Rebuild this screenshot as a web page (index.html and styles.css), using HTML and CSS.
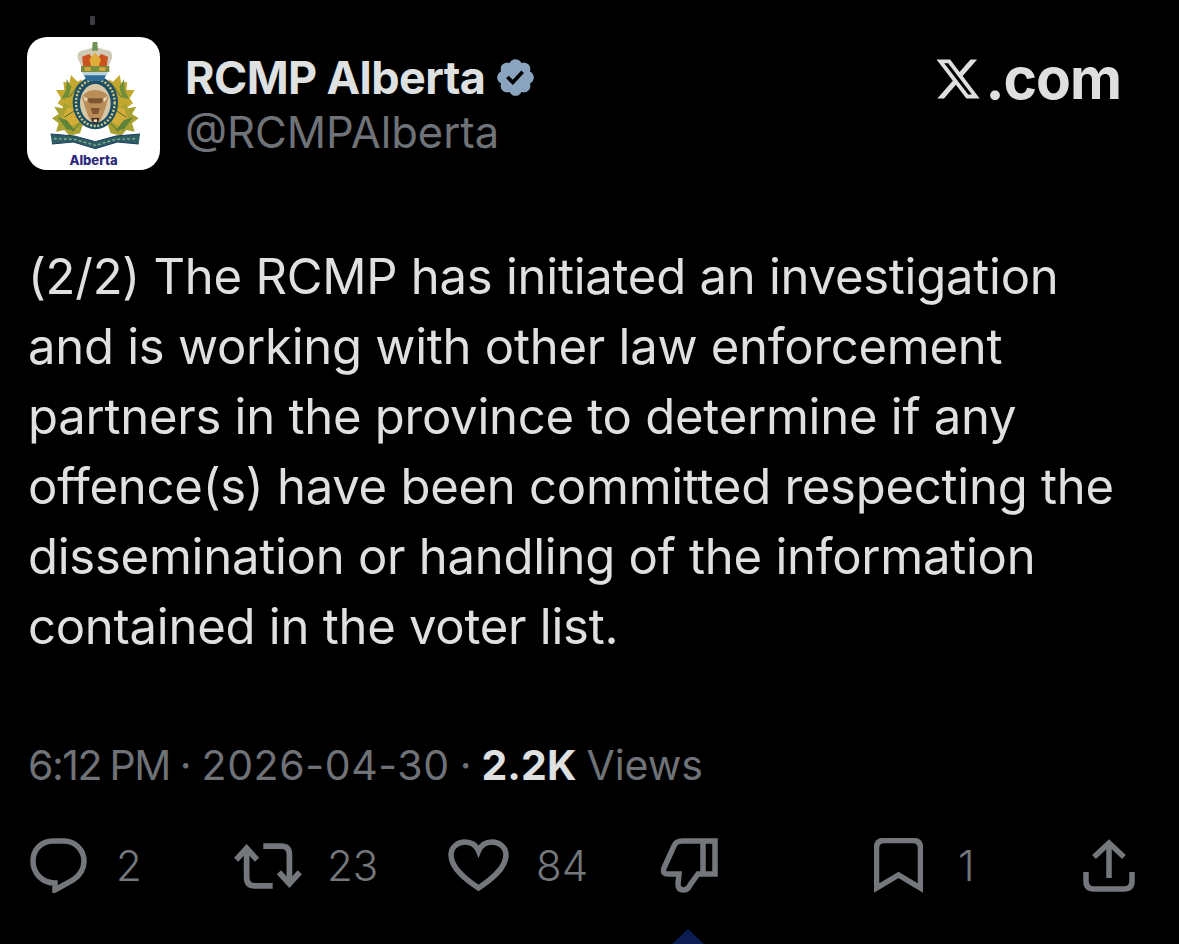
FILE: index.html
```html
<!DOCTYPE html>
<html lang="en">

<head>
    <meta charset="UTF-8">
    <title>RCMP Alberta on X</title>
    <link rel="stylesheet" href="styles.css">
</head>

<body>
    <span class="notch"></span>

    <header class="header">
        <div class="avatar">
            <svg class="crest" viewBox="0 0 288 330">
                <defs>
                    <g id="leaves">
                        <path fill="#c4a72e" d="M75 105 L95 125 L108 118 L106 160 L97 200 L60 207 L35 190 L45 175 L30 150 L55 150 L52 125 L70 130 Z" />
                        <path fill="#6f8f3a" d="M62 118 L76 140 L68 172 L46 178 L60 150 Z" />
                        <path fill="#a9a233" d="M55 190 L75 200 L97 195 L112 250 L102 280 L70 287 L55 270 L30 275 L38 250 L18 235 L38 222 L25 200 L50 205 Z" />
                        <path fill="#d3ad38" d="M62 205 L92 200 L100 245 L72 262 L48 240 Z" />
                        <path fill="#5f8338" d="M35 232 L62 240 L88 272 L62 268 Z" />
                        <path fill="none" stroke="#4d6d33" stroke-width="3" d="M100 130 L70 172 M96 205 L55 232 M102 250 L78 275" />
                    </g>
                </defs>
                <g class="crest_soft">
                    <!-- maple leaves -->
                    <use href="#leaves" />
                    <use href="#leaves" transform="matrix(-1 0 0 1 296 0)" />
                    <!-- ring -->
                    <ellipse cx="148" cy="188" rx="68" ry="80" fill="#1c4f63" />
                    <ellipse cx="148" cy="188" rx="58" ry="70" fill="none" stroke="#d7c77f" stroke-width="7" stroke-dasharray="6 5" />
                    <ellipse cx="148" cy="190" rx="46" ry="58" fill="#d6c8a6" />
                    <!-- bison head -->
                    <path fill="#b98c58" d="M108 170 Q122 150 148 150 Q174 150 188 170 L178 205 Q170 230 160 246 H136 Q126 230 118 205 Z" />
                    <path fill="#7d5530" d="M122 175 H174 L166 190 H130 Z M134 204 H162 L156 222 H140 Z" />
                    <path fill="#e6d8b8" d="M110 168 L126 176 L120 186 Z M186 168 L170 176 L176 186 Z" />
                    <path fill="#3d2412" d="M136 234 H160 L155 250 H141 Z" />
                    <path fill="#e8dfc8" d="M143 238 H153 V246 H143 Z" />
                    <!-- crown -->
                    <path fill="#cfc9b6" d="M95 55 Q92 30 118 30 Q148 16 178 30 Q202 30 198 55 L186 82 H108 Z" />
                    <path fill="#c9521f" d="M108 50 L130 42 L147 64 L165 42 L186 50 L182 80 H112 Z" />
                    <path fill="#e0ad3a" d="M130 58 L147 38 L165 58 L158 80 H136 Z" />
                    <path fill="#7c8c3e" d="M105 78 H190 V96 H105 Z" />
                    <path fill="#d9a93a" d="M116 82 H134 V92 H116 Z M160 82 H178 V92 H160 Z" />
                    <path fill="#6f9358" d="M140 6 H154 L156 32 H138 Z" />
                    <path fill="#bcd2da" d="M108 96 H186 L180 108 H114 Z" />
                    <path fill="#2f6d96" d="M114 106 H180 L172 122 H122 Z" />
                    <!-- motto scroll -->
                    <path fill="#2f5f60" d="M14 282 L85 288 L148 305 L210 288 L282 282 L278 312 L214 306 L148 326 L82 306 L18 312 Z" />
                    <path fill="none" stroke="#8fb0a0" stroke-width="4" stroke-dasharray="8 7" d="M24 296 L85 298 L148 316 L210 298 L272 296" />
                    <path fill="none" stroke="#1c3a66" stroke-width="3" d="M14 282 L85 288 L148 305 L210 288 L282 282 M18 312 L82 306 L148 326 L214 306 L278 312" />
                </g>
            </svg>
            <span class="avatar_label">Alberta</span>
        </div>

        <div class="author">
            <div class="author_name">
                RCMP Alberta
                <svg class="badge" viewBox="0 0 24 24">
                    <path d="M22.25 12c0-1.43-.88-2.67-2.19-3.34.46-1.39.2-2.9-.81-3.91s-2.52-1.27-3.91-.81c-.66-1.31-1.91-2.19-3.34-2.19s-2.67.88-3.33 2.19c-1.4-.46-2.91-.2-3.92.81s-1.26 2.52-.8 3.91c-1.31.67-2.2 1.91-2.2 3.34s.89 2.67 2.2 3.34c-.46 1.39-.21 2.9.8 3.91s2.52 1.26 3.91.81c.67 1.31 1.91 2.19 3.34 2.19s2.68-.88 3.34-2.19c1.39.45 2.9.2 3.91-.81s1.27-2.52.81-3.91c1.31-.67 2.19-1.91 2.19-3.34zm-11.71 4.2L6.8 12.46l1.41-1.42 2.26 2.26 4.8-5.23 1.47 1.36-6.2 6.77z" />
                </svg>
            </div>
            <div class="author_handle">@RCMPAlberta</div>
        </div>

        <div class="brand">
            <svg class="brand_x" viewBox="1 2 22 20">
                <path d="M18.244 2.25h3.308l-7.227 8.26 8.502 11.24H16.17l-5.214-6.817L4.99 21.75H1.68l7.73-8.835L1.254 2.25H8.08l4.713 6.231zm-1.161 17.52h1.833L7.084 4.126H5.117z" />
            </svg>
            <span>.com</span>
        </div>
    </header>

    <p class="tweet_text">
        (2/2) The RCMP has initiated an investigation<br>
        and is working with other law enforcement<br>
        partners in the province to determine if any<br>
        offence(s) have been committed respecting the<br>
        dissemination or handling of the information<br>
        contained in the voter list.
    </p>

    <div class="tweet_meta">
        <span class="tweet_time">6:12 PM</span> · <span class="tweet_date">2026-04-30</span> · <b>2.2K</b> Views
    </div>

    <!-- 底部操作栏 -->
    <section class="actions">
        <div class="action">
            <svg width="57" height="55" viewBox="0 0 57 55">
                <path d="M25 45 C12 45 3 35 3 23 C3 11 12 3 23 3 H34 C45 3 54 12 54 23 C54 32 49 38 43 42 L25 52 Z" />
            </svg>
            <span class="count count_reply">2</span>
        </div>
        <div class="action">
            <svg width="70" height="48" viewBox="0 0 67 46">
                <path d="M13 6 V34 Q13 42 21 42 H38" />
                <path d="M3 17 L13 6 L23 17" />
                <path d="M29 4 H46 Q54 4 54 12 V40" />
                <path d="M44 29 L54 40 L64 29" />
            </svg>
            <span class="count count_repost">23</span>
        </div>
        <div class="action">
            <svg width="61" height="53" viewBox="0 0 61 53">
                <path d="M30.5 49 C20 42 3 30 3 16 C3 8 10 3 17 3 C23 3 28 6 30.5 12 C33 6 38 3 44 3 C51 3 58 8 58 16 C58 30 41 42 30.5 49 Z" />
            </svg>
            <span class="count count_like">84</span>
        </div>
        <div class="action">
            <svg width="58" height="55" viewBox="0 0 58 55">
                <path d="M55 3 H22 Q16 3 14 8 L4 30 Q2 36 8 36 H19 L18 46 Q18 52 24 52 Q28 52 30 47 L38 36 H55 Z" />
                <path d="M43 3 V36" />
            </svg>
        </div>
        <div class="action">
            <svg width="49" height="55" viewBox="0 0 49 55">
                <path d="M2.5 50 V10 Q2.5 2.5 10 2.5 H39 Q46.5 2.5 46.5 10 V50 L24.5 37 Z" />
            </svg>
            <span class="count count_save">1</span>
        </div>
        <div class="action">
            <svg width="52" height="53" viewBox="0 0 52 53">
                <path d="M26 4 V39" />
                <path d="M11 18 L26 4 L41 18" />
                <path d="M3 33 V42 Q3 50 11 50 H41 Q49 50 49 42 V33" />
            </svg>
        </div>
    </section>

    <span class="tab_marker"></span>
</body>

</html>
```

FILE: styles.css
```css
* {
    padding: 0;
    margin: 0;
    box-sizing: border-box;
}

html,
body {
    height: 944px;
    overflow: hidden;
}

body {
    position: relative;
    background-color: #000000;
    color: #dfe0e1;
    font-family: Inter, "Liberation Sans", sans-serif;
    padding-top: 37px;
}

.notch {
    position: absolute;
    left: 90px;
    top: 16px;
    width: 5px;
    height: 9px;
    border-radius: 1px;
    background-color: #3c3d40;
}

.header {
    display: flex;
    align-items: flex-start;
    padding: 0 58px 0 27px;
}

.avatar {
    display: flex;
    flex-direction: column;
    align-items: center;
    width: 133px;
    height: 133px;
    padding-top: 3px;
    border-radius: 20px;
    background-color: #ffffff;
}

.crest {
    width: 96px;
    height: 110px;
    flex: none;
    filter: blur(0.5px);
}

.avatar_label {
    margin-top: 3px;
    font-size: 13px;
    line-height: 15px;
    font-weight: 800;
    color: #2d2a7c;
}

.author {
    flex: 1;
    padding: 16px 0 0 25px;
}

.author_name {
    display: flex;
    align-items: center;
    gap: 9px;
    height: 48px;
    font-size: 45px;
    font-weight: 700;
    letter-spacing: -0.6px;
}

.badge {
    width: 43px;
    height: 43px;
    fill: #8aa3be;
}

.author_handle {
    margin-top: 7px;
    font-size: 43.5px;
    line-height: 48px;
    color: #6f7276;
}

.brand {
    display: flex;
    align-items: center;
    gap: 5px;
    padding-top: 16px;
    font-size: 57px;
    line-height: 52px;
    font-weight: 700;
    letter-spacing: -1px;
    color: #dfdfdf;
}

.brand_x {
    width: 44px;
    height: 44px;
    fill: #dfdfdf;
}

.tweet_text {
    margin-top: 72px;
    padding-left: 28px;
    font-size: 49px;
    line-height: 70px;
    letter-spacing: -0.25px;
    white-space: nowrap;
}

.tweet_meta {
    margin-top: 78px;
    padding-left: 28px;
    font-size: 41px;
    line-height: 50px;
    word-spacing: -1.5px;
    color: #6f7276;
}

.tweet_time {
    letter-spacing: -1.5px;
}

.tweet_date {
    letter-spacing: 0.6px;
}

.tweet_meta b {
    font-weight: 700;
    color: #dfe0e1;
}

.actions {
    display: grid;
    grid-template-columns: 203px 215px 212px 214px 209px auto;
    align-items: center;
    margin-top: 48px;
    padding-left: 30px;
}

.action {
    display: flex;
    align-items: center;
    height: 55px;
}

.action svg {
    flex: none;
    fill: none;
    stroke: #74787c;
    stroke-width: 5.5;
}

.count {
    font-size: 42px;
    line-height: 55px;
    font-weight: 300;
    color: #74787c;
}

.count_reply {
    margin-left: 29px;
}

.count_repost {
    margin-left: 24px;
}

.count_like {
    margin-left: 27px;
}

.count_save {
    margin-left: 35px;
}

.tab_marker {
    position: absolute;
    left: 672px;
    top: 929px;
    border-left: 16px solid transparent;
    border-right: 16px solid transparent;
    border-bottom: 15px solid #0b1d52;
}
```
